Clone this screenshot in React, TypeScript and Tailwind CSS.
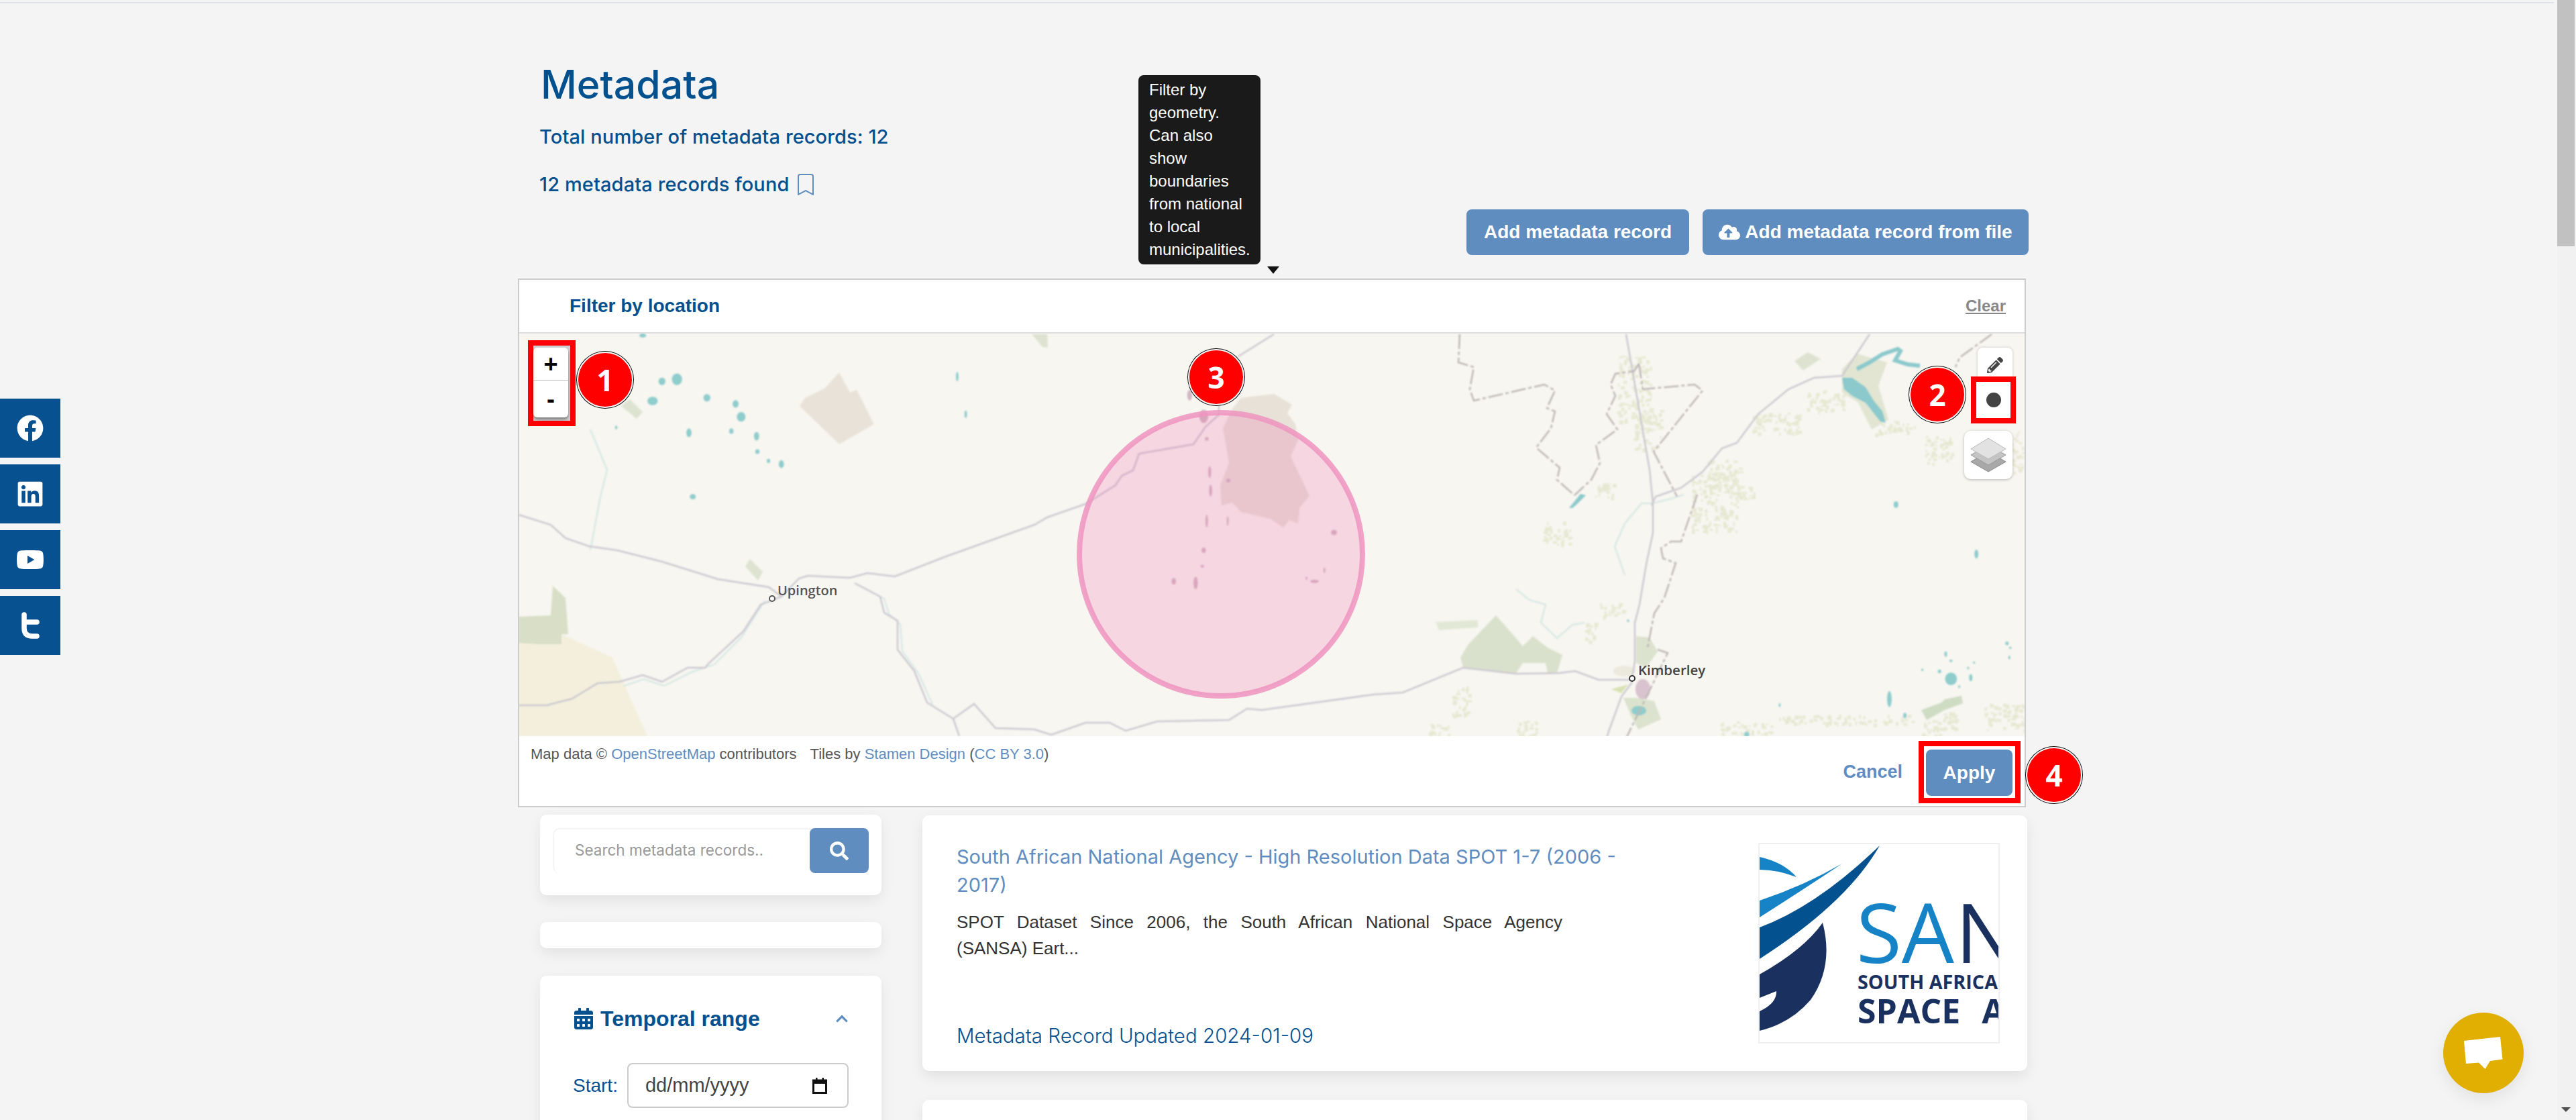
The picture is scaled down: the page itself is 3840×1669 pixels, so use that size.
import { BsBookmark } from "react-icons/bs";
import {
  FaCalendarAlt, FaChevronUp, FaCloudUploadAlt, FaFacebook, FaLinkedin,
  FaPencilAlt, FaSearch, FaYoutube,
} from "react-icons/fa";

// all map geometry is in page pixels, the svg viewBox starts at the map corner
const ROADS = [
  "773,767 821,782 843,802 878,814 920,820 987,837 1070,863 1146,875 1165,889 1134,901 1108,941 1057,988 1051,995 1025,995 987,1016 958,1006 923,1016 891,1018 853,1041 815,1051 773,1051",
  "1165,889 1191,862 1204,858 1267,861 1293,854 1334,859 1408,830 1542,782 1561,771 1618,751 1663,723 1672,709 1689,701 1698,676 1779,662 1797,636 1817,618 1817,593",
  "1846,531 1899,498",
  "1274,869 1312,889 1318,913 1338,925 1338,968 1363,1000 1382,1047 1421,1071 1430,1097",
  "1421,1071 1452,1049 1484,1085 1542,1087 1567,1095 1618,1077 1654,1077 1678,1089 1725,1075 1832,1073 1859,1056 1881,1058 2047,1035 2091,1032 2181,995 2260,1004 2324,1003 2348,1000 2383,1013 2432,1013",
  "2424,498 2459,700 2464,750 2464,794 2454,841 2444,901 2437,928 2437,985 2432,1018 2417,1038 2398,1090 2395,1100",
  "2787,498 2746,560 2704,563 2666,580 2621,617 2589,660 2567,668 2538,703 2506,727 2468,740 2462,753",
];
const BORDERS = [
  "2176,498 2174,540 2197,547 2191,580 2197,597 2302,573 2318,582 2306,608 2318,613 2312,638 2290,667 2325,697 2321,715 2347,738",
  "2443,542 2436,553 2408,557 2401,573 2408,590 2395,617 2411,640 2379,663 2385,690 2372,715 2347,738",
  "2443,542 2449,580 2526,573 2538,582 2494,637 2465,673 2500,740",
  "2530,737 2506,807 2491,807 2476,817 2479,832 2498,839 2481,891 2466,914 2456,965",
  "2471,968 2486,973 2456,1035 2425,1098",
  "2969,498 2921,533 2915,547",
];
const RIVERS = [
  "1140,895 1105,950 1065,990 1030,1002 990,1022 960,1012 930,1022",
  "1280,872 1318,892 1325,915 1342,930 1345,970 1370,1005 1390,1050",
  "2260,878 2280,894 2304,901 2297,928 2321,951 2344,931 2362,928",
  "2422,857 2407,814 2422,780 2447,750 2464,750 2491,743 2510,737",
  "880,820 895,740 905,700 880,640",
];
const LAKES_LEFT = [
  [375, 190, 12, 22], [340, 198, 8, 14], [318, 272, 12, 16], [445, 260, 8, 14], [512, 283, 7, 14],
  [525, 332, 10, 18], [403, 392, 6, 16], [502, 386, 5, 10], [561, 405, 6, 16], [563, 463, 5, 9],
  [589, 498, 4, 8], [619, 510, 6, 15], [412, 633, 7, 10], [233, 372, 3, 7], [1050, 322, 3, 14],
  [1030, 180, 3, 18], [295, 25, 8, 8],
];
const LAKES_RIGHT = [
  [1153, 155, 7, 15], [1397, 375, 6, 20], [1304, 820, 4, 12], [1320, 850, 5, 5], [1320, 930, 18, 28],
  [1285, 897, 5, 8], [1233, 890, 3, 6], [1372, 882, 3, 6], [1390, 858, 3, 5], [1380, 925, 5, 15],
  [1345, 965, 3, 6], [1490, 772, 5, 8], [1500, 792, 4, 5], [1497, 835, 3, 8], [1133, 1020, 7, 35],
  [800, 1047, 3, 8], [1180, 1093, 5, 12], [700, 1178, 8, 12], [340, 672, 3, 6],
];
const TOWNS = [
  [478, 250, 8, 20], [525, 330, 15, 25], [535, 415, 6, 7], [545, 540, 5, 22], [548, 610, 5, 22],
  [535, 725, 4, 24], [605, 725, 3, 18], [960, 768, 10, 10], [425, 952, 7, 12], [498, 958, 7, 24],
  [895, 952, 14, 6], [868, 940, 3, 6], [928, 910, 3, 10], [520, 895, 6, 5], [525, 835, 7, 10],
  [607, 572, 7, 8],
];
const SCRUB = [
  [2555, 750, 35, 43], [2436, 580, 25, 50], [2455, 640, 20, 30], [2570, 710, 25, 25], [2647, 630, 35, 15],
  [2723, 597, 30, 15], [2825, 637, 30, 10], [2889, 670, 20, 20], [3000, 673, 15, 30], [2987, 1068, 30, 20],
  [2750, 1072, 100, 7], [2879, 1085, 15, 12], [2176, 1043, 14, 24], [2145, 1087, 15, 8], [2319, 794, 20, 17],
  [2402, 908, 17, 10], [2370, 941, 8, 14], [2275, 1085, 15, 12], [2392, 730, 15, 10], [2600, 1085, 40, 10],
  [2600, 732, 14, 10], [2905, 1075, 12, 14],
];

function scrubMarks() {
  const out: { x: number; y: number; w: number; h: number }[] = [];
  let seed = 17;
  const next = () => {
    seed = (seed * 9301 + 49297) % 233280;
    return seed / 233280;
  };
  SCRUB.forEach(([cx, cy, rx, ry]) => {
    const n = Math.round((rx * ry) / 10) + 8;
    for (let i = 0; i < n; i++) {
      out.push({
        x: cx + (next() * 2 - 1) * rx,
        y: cy + (next() * 2 - 1) * ry,
        w: 2 + next() * 4,
        h: 2 + next() * 4,
      });
    }
  });
  return out;
}

function MapArt() {
  return (
    <svg viewBox="774 497 2244 600" className="block h-[600px] w-[2244px] bg-[#f7f6f1]">
      <g className="blur-[1px]">
        <polygon points="773,958 837,945 913,980 965,1097 773,1097" fill="#f3efdc" />
        <polygon points="773,919 821,917 824,873 843,891 847,945 837,945 837,960 802,960 773,958" fill="#d8dfc6" />
        <polygon points="926,605 939,595 958,614 949,624" fill="#dde3d0" />
        <polygon points="1111,844 1118,833 1137,852 1130,865" fill="#dde3d0" />
        <polygon points="1538,498 1561,498 1562,518 1554,517" fill="#dde3d0" />
        <polygon points="1251,555 1267,585 1277,581 1303,632 1251,662 1192,605 1200,593 1229,579" fill="#e9e2d8" />
        <polygon
          points="1850,593 1899,587 1926,603 1919,616 1931,632 1935,656 1924,680 1952,739 1937,757 1935,780 1922,775 1913,786 1893,773 1850,763 1837,749 1821,753 1819,723 1832,690 1823,638 1837,609"
          fill="#e8e1d7"
        />
        <polygon points="2140,927 2203,924 2203,935 2145,939" fill="#e2e8d6" />
        <polygon points="2230,917 2260,951 2270,963 2285,948 2307,965 2329,976 2321,1003 2307,1003 2304,988 2270,988 2260,1003 2181,994 2177,980 2189,960" fill="#d9e1cc" />
        <polygon points="2439,948 2459,950 2471,971 2454,995 2439,988" fill="#dbe2cd" />
        <polygon points="2420,1040 2442,1040 2466,1045 2476,1072 2442,1087 2432,1068" fill="#dbe2cd" />
        <polygon points="2402,1027 2427,1020 2417,1033" fill="#d9e2b5" />
        <polygon points="2746,550 2768,527 2813,540 2800,575 2815,625 2790,640 2770,600 2746,585" fill="#e1e5d2" />
        <polygon points="2675,538 2695,525 2714,535 2688,552" fill="#dde3d0" />
        <polygon points="2864,1058 2894,1047 2899,1042 2924,1037 2926,1048 2899,1058 2872,1073" fill="#cfdcc4" />
        <ellipse cx="2421" cy="1000" rx="16" ry="8" fill="#ece9dd" />
        <ellipse cx="2449" cy="1027" rx="11" ry="15" fill="#d9c3cf" />

        {scrubMarks().map((m, i) => (
          <rect key={i} x={m.x} y={m.y} width={m.w} height={m.h} fill="#e7e8d2" />
        ))}

        {RIVERS.map((p) => (
          <polyline key={p} points={p} fill="none" stroke="#d3e7e4" strokeWidth="2" />
        ))}

        <polygon points="2746,563 2761,563 2781,577 2793,597 2806,613 2811,630 2803,628 2781,600 2761,590 2749,580" fill="#8cc9cc" />
        <polyline points="2768,550 2787,540 2806,528 2829,520 2833,523 2825,537 2844,543 2862,545" fill="none" stroke="#8cc9cc" strokeWidth="6" />
        <ellipse cx="2443" cy="1059" rx="11" ry="7" fill="#8fcccc" />
        <polygon points="2339,757 2356,736 2364,738 2350,752 2344,757" fill="#8cc9cc" />
        {LAKES_LEFT.map(([x, y, rx, ry]) => (
          <ellipse key={`${x}-${y}`} cx={770 + x / 1.568} cy={490 + y / 2.53} rx={rx / 1.568} ry={ry / 2.53} fill="#8fcccc" />
        ))}
        {LAKES_RIGHT.map(([x, y, rx, ry]) => (
          <ellipse key={`${x}-${y}`} cx={2260 + x / 2.036} cy={700 + y / 2.985} rx={rx / 2.036} ry={ry / 2.985} fill="#8fcccc" />
        ))}

        {ROADS.map((p) => (
          <polyline key={p} points={p} fill="none" stroke="#cdc9d1" strokeWidth="2.5" />
        ))}
        {BORDERS.map((p) => (
          <polyline key={p} points={p} fill="none" stroke="#bfb8b8" strokeWidth="2.5" strokeDasharray="22 4 5 4" />
        ))}
        {TOWNS.map(([x, y, rx, ry]) => (
          <ellipse key={`${x}-${y}`} cx={1560 + x / 2.24} cy={490 + y / 2.53} rx={rx / 2.24} ry={ry / 2.53} fill="#d3b6c2" />
        ))}
      </g>
      <circle cx="1151" cy="892" r="4" fill="#fff" stroke="#555" strokeWidth="2" />
      <circle cx="2433" cy="1011" r="4" fill="#fff" stroke="#333" strokeWidth="2" />
      <text x="1159" y="887" fontFamily="Open Sans, sans-serif" fontWeight="600" fontSize="20" fill="#555">Upington</text>
      <text x="2442" y="1006" fontFamily="Open Sans, sans-serif" fontWeight="600" fontSize="20.5" fill="#444">Kimberley</text>
      <circle cx="1820" cy="826" r="211" fill="#f070b0" fillOpacity="0.24" stroke="#ee94bf" strokeOpacity="0.85" strokeWidth="8" />
    </svg>
  );
}

function SansaLogo() {
  return (
    <svg viewBox="2624 1258 356 295" className="block h-[295px] w-[356px]">
      <path d="M2624 1277 Q2660 1285 2679 1307 Q2650 1296 2624 1296Z" fill="#1583c6" />
      <path d="M2624 1342 Q2690 1320 2747 1287 Q2690 1325 2624 1367Z" fill="#1583c6" />
      <path d="M2803 1260 Q2755 1345 2624 1429 L2624 1382 Q2710 1350 2803 1260Z" fill="#03528f" />
      <path d="M2718 1375 Q2735 1440 2700 1490 Q2670 1525 2624 1536 L2624 1507 Q2650 1495 2649 1477 L2624 1487 L2624 1452 Q2690 1415 2718 1375Z" fill="#1a305e" />
      <text x="2768" y="1435" fontFamily="Open Sans, sans-serif" fontSize="122" textLength="146" lengthAdjust="spacingAndGlyphs" fill="#1583c6">SA</text>
      <text x="2916" y="1435" fontFamily="Open Sans, sans-serif" fontSize="122" fill="#1a305e">N</text>
      <text x="2770" y="1474" fontFamily="Open Sans, sans-serif" fontWeight="700" fontSize="28" textLength="209" lengthAdjust="spacingAndGlyphs" fill="#1a305e">SOUTH AFRICA</text>
      <text x="2770" y="1525" fontFamily="Open Sans, sans-serif" fontWeight="700" fontSize="50" wordSpacing="19" fill="#1a305e">SPACE A</text>
    </svg>
  );
}

function Badge({ n, className }: { n: number; className: string }) {
  return (
    <div className={`absolute flex h-[84px] w-[84px] items-center justify-center rounded-full border-2 border-white bg-[#ff0000] font-['Open_Sans',sans-serif] text-[44px] font-bold text-white ring-1 ring-black ${className}`}>
      {n}
    </div>
  );
}

const socialClass = "flex h-[88px] w-[90px] items-center justify-center bg-[#085191] text-white";

export default function App() {
  return (
    <div className="flex h-[1669px] w-[3840px] overflow-hidden bg-[#f4f4f4] font-['Liberation_Sans',Arial,sans-serif]">
      <div className="relative h-[1669px] w-[3812px] overflow-hidden">
        <div className="mr-[5px] mt-[3px] h-[2px] bg-[#dee2e6]" />

        {/* social rail */}
        <div className="absolute left-0 top-[594px] flex flex-col gap-[10px]">
          <div className={socialClass}><FaFacebook size={40} /></div>
          <div className={socialClass}><FaLinkedin size={42} /></div>
          <div className={socialClass}><FaYoutube size={42} /></div>
          <div className={socialClass}>
            <svg width="30" height="40" viewBox="0 0 30 40" fill="none" stroke="#fff" strokeWidth="7.5" strokeLinecap="round" strokeLinejoin="round">
              <path d="M6 4 V24 Q6 36 18 36 H25 M6 15 H25" />
            </svg>
          </div>
        </div>

        <div className="relative ml-[772px] w-[2252px] pt-[91px]">
          {/* tooltip */}
          <div className="absolute left-[925px] top-[107px] w-[182px] rounded-[8px] bg-[#1a1a1a] px-[16px] py-[5px] text-[24px] leading-[34px] text-white">
            Filter by geometry. Can also show boundaries from national to local municipalities.
          </div>
          <svg className="absolute left-[1117px] top-[392px]" width="18" height="11" viewBox="0 0 18 11">
            <polygon points="0,0 18,0 9,11" fill="#111" />
          </svg>

          <div className="pl-[32px]">
            <h1 className="ml-[2px] font-['Inter',sans-serif] text-[59px] font-medium leading-[60px] text-[#03508f]">Metadata</h1>
            <p className="mt-[28px] font-['Inter',sans-serif] text-[29px] font-medium leading-[40px] tracking-[0.1px] text-[#03508f]">Total number of metadata records: 12</p>
            <p className="mt-[31px] flex items-center font-['Inter',sans-serif] text-[29px] font-medium leading-[40px] tracking-[0.1px] text-[#03508f]">
              12 metadata records found
              <BsBookmark size={32} className="ml-[9px] text-[#5f8dbf]" />
            </p>
          </div>

          <div className="mt-[17px] flex justify-end gap-[20px]">
            <button className="flex h-[68px] w-[332px] items-center justify-center rounded-[8px] bg-[#5f8dbf] text-[28px] font-bold text-white">Add metadata record</button>
            <button className="flex h-[68px] w-[486px] items-center justify-center gap-[7px] rounded-[8px] bg-[#5f8dbf] text-[28px] font-bold text-white">
              <FaCloudUploadAlt size={32} />
              Add metadata record from file
            </button>
          </div>

          {/* map panel */}
          <div className="mt-[35px] w-[2248px] border-2 border-[#cccccc] bg-white">
            <div className="flex h-[80px] items-center justify-between border-b-2 border-[#dddddd] pl-[75px] pr-[28px]">
              <span className="text-[28px] font-bold text-[#03508f]">Filter by location</span>
              <span className="text-[24px] font-bold text-[#888888] underline">Clear</span>
            </div>

            <div className="relative h-[600px]">
              <MapArt />

              <div className="absolute left-[13px] top-[10px] h-[128px] w-[71px] border-[8px] border-[#ff0000] bg-[#cfcfcf]">
                <div className="mt-[3px] flex h-[104px] w-[52px] flex-col rounded-[6px] bg-white font-bold text-black shadow-[0_3px_4px_rgba(0,0,0,0.4)]">
                  <div className="flex h-[50px] items-center justify-center border-b border-[#bbbbbb] text-[36px]">+</div>
                  <div className="flex flex-1 items-center justify-center text-[36px]">-</div>
                </div>
              </div>
              <Badge n={1} className="left-[86px] top-[27px]" />

              <div className="absolute left-[2174px] top-[21px] flex h-[52px] w-[52px] items-center justify-center rounded-t-[8px] bg-white text-[#444444] shadow-[0_0_4px_rgba(0,0,0,0.2)]">
                <FaPencilAlt size={24} />
              </div>
              <div className="absolute left-[2164px] top-[64px] flex h-[70px] w-[67px] items-center justify-center border-[8px] border-[#ff0000] bg-white">
                <div className="h-[22px] w-[22px] rounded-full bg-[#444444]" />
              </div>
              <Badge n={2} className="left-[2072px] top-[49px]" />

              <div className="absolute left-[2154px] top-[145px] flex h-[72px] w-[72px] items-center justify-center rounded-[10px] bg-white shadow-[0_1px_4px_rgba(0,0,0,0.25)]">
                <svg width="54" height="52" viewBox="0 0 54 52">
                  <polygon points="27,21 53,36 27,51 1,36" fill="#a8a8a8" stroke="#888" />
                  <polygon points="27,11 53,26 27,41 1,26" fill="#c4c4c4" stroke="#999" />
                  <polygon points="27,1 53,17 27,32 1,17" fill="#e2e2e2" stroke="#bbb" />
                </svg>
              </div>
              <Badge n={3} className="left-[997px] top-[23px]" />
            </div>

            <div className="relative flex h-[104px] items-start justify-between pl-[17px] pr-[6px]">
              <div className="mt-[13px] flex gap-[20px] text-[22px] leading-[28px] text-[#555555]">
                <span>Map data © <span className="text-[#5f8dbf]">OpenStreetMap</span> contributors</span>
                <span>Tiles by <span className="text-[#5f8dbf]">Stamen Design</span> (<span className="text-[#5f8dbf]">CC BY 3.0</span>)</span>
              </div>
              <div className="mt-[7px] flex items-center gap-[24px]">
                <span className="text-[27px] font-bold text-[#5f8dbf]">Cancel</span>
                <div className="h-[93px] w-[152px] border-[8px] border-[#ff0000] pl-[3px] pt-[5px]">
                  <button className="flex h-[69px] w-[129px] items-center justify-center rounded-[8px] bg-[#5f8dbf] text-[28px] font-bold text-white">Apply</button>
                </div>
              </div>
              <Badge n={4} className="left-[2246px] top-[16px]" />
            </div>
          </div>

          {/* lower section */}
          <div className="mt-[11px] flex gap-[61px] pl-[33px]">
            <div className="flex w-[509px] flex-none flex-col">
              <div className="h-[120px] rounded-[10px] bg-white px-[19px] pt-[20px] shadow-[0_8px_20px_rgba(0,0,0,0.07)]">
                <div className="flex h-[67px]">
                  <div className="flex flex-1 items-center rounded-l-[10px] border-l-2 border-t-2 border-[#f4f4f4] pb-[4px] pl-[31px] font-['Inter',sans-serif] text-[22.5px] text-[#999999]">Search metadata records..</div>
                  <div className="flex w-[88px] items-center justify-center rounded-[8px] bg-[#5f8dbf] text-white"><FaSearch size={28} /></div>
                </div>
              </div>
              <div className="mt-[40px] h-[39px] rounded-[10px] bg-white shadow-[0_8px_20px_rgba(0,0,0,0.07)]" />
              <div className="mt-[41px] h-[500px] rounded-[10px] bg-white px-[49px] pt-[44px] shadow-[0_8px_20px_rgba(0,0,0,0.07)]">
                <div className="flex h-[40px] items-center justify-between">
                  <span className="flex items-center gap-[9px] text-[32px] font-bold text-[#03508f]">
                    <FaCalendarAlt size={32} />
                    Temporal range
                  </span>
                  <FaChevronUp size={20} className="text-[#5f8dbf]" />
                </div>
                <div className="mt-[46px] flex items-center gap-[14px]">
                  <span className="text-[28px] text-[#03508f]">Start:</span>
                  <div className="flex h-[67px] w-[331px] items-center justify-between rounded-[8px] border-2 border-[#cccccc] pl-[25px] pr-[30px] text-[29px] text-[#444444]">
                    dd/mm/yyyy
                    <svg width="22" height="24" viewBox="0 0 22 24">
                      <path d="M1.5 4h19v18.5h-19z" fill="none" stroke="#111" strokeWidth="3" />
                      <rect x="0" y="3" width="22" height="6" fill="#111" />
                      <rect x="5" y="0" width="2.5" height="4" fill="#111" />
                      <rect x="14.5" y="0" width="2.5" height="4" fill="#111" />
                    </svg>
                  </div>
                </div>
              </div>
            </div>

            <div className="flex w-[1647px] flex-none flex-col pt-[1px]">
              <div className="flex h-[381px] rounded-[10px] bg-white pl-[51px] pr-[41px] shadow-[0_8px_20px_rgba(0,0,0,0.08)]">
                <div className="flex flex-1 flex-col pb-[32px] pt-[41px]">
                  <div className="font-['Inter',sans-serif] text-[29px] leading-[42px] text-[#5f8dbf]">
                    South African National Agency - High Resolution Data SPOT 1-7 (2006 -<br />2017)
                  </div>
                  <p className="mt-[15px] w-[903px] text-justify text-[26px] leading-[39px] text-[#333333]">
                    SPOT Dataset Since 2006, the South African National Space Agency (SANSA) Eart...
                  </p>
                  <div className="mt-auto font-['Inter',sans-serif] text-[29.5px] font-light leading-[42px] text-[#03508f]">Metadata Record Updated 2024-01-09</div>
                </div>
                <div className="mt-[41px] h-[299px] w-[360px] flex-none overflow-hidden border-2 border-[#f0f0f0]">
                  <SansaLogo />
                </div>
              </div>
              <div className="mt-[43px] h-[300px] rounded-[10px] bg-white shadow-[0_8px_20px_rgba(0,0,0,0.08)]" />
            </div>
          </div>
        </div>

        {/* chat button */}
        <div className="absolute left-[3642px] top-[1509px] flex h-[120px] w-[120px] items-center justify-center rounded-full bg-[#e1af02] shadow-[0_8px_24px_rgba(0,0,0,0.08)]">
          <svg width="58" height="49" viewBox="0 0 58 49">
            <polygon points="0,6 54,0 57.5,33.5 39,36 31.5,48 22,38.5 3,40" fill="#fff" />
          </svg>
        </div>
      </div>

      {/* scrollbar */}
      <div className="flex h-[1669px] w-[28px] flex-none flex-col items-start bg-[#f1f1f1]">
        <div className="h-[367px] w-[26px] bg-[#c1c1c1]" />
        <svg className="mb-[12px] ml-[6px] mt-auto" width="14" height="7" viewBox="0 0 14 7">
          <polygon points="0,0 14,0 7,7" fill="#505050" />
        </svg>
      </div>
    </div>
  );
}
